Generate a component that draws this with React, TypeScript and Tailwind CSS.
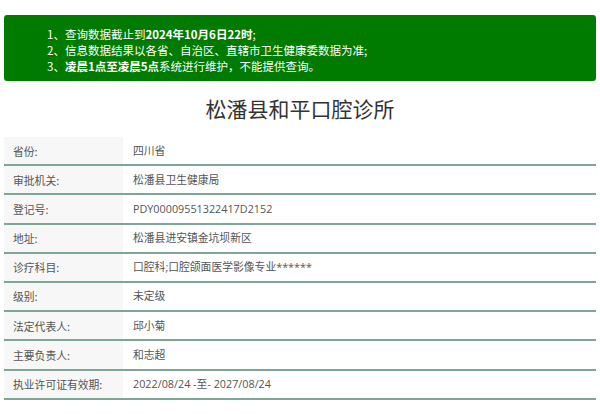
import React from "react";

const rows: [string, string][] = [
  ["省份:", "四川省"],
  ["审批机关:", "松潘县卫生健康局"],
  ["登记号:", "PDY00009551322417D2152"],
  ["地址:", "松潘县进安镇金坑坝新区"],
  ["诊疗科目:", "口腔科;口腔颌面医学影像专业******"],
  ["级别:", "未定级"],
  ["法定代表人:", "邱小菊"],
  ["主要负责人:", "和志超"],
  ["执业许可证有效期:", "2022/08/24 -至- 2027/08/24"],
];

export default function App() {
  return (
    <div
      className="w-[600px] h-[414px] bg-white overflow-hidden"
      style={{ fontFamily: '"Noto Sans CJK SC", "Noto Sans", sans-serif' }}
    >
      <div className="mx-[4px] mt-[15px] h-[66px] rounded-[3px] bg-[#007b00] pl-[43px] pt-[11px] text-[11.5px] leading-[16px] text-white">
        <div>
          1、查询数据截止到<b>2024年10月6日22时</b>;
        </div>
        <div>2、信息数据结果以各省、自治区、直辖市卫生健康委数据为准;</div>
        <div>
          3、<b>凌晨1点至凌晨5点</b>系统进行维护，不能提供查询。
        </div>
      </div>
      <div className="h-[56px] flex items-center justify-center text-[21px] text-[#333]">
        松潘县和平口腔诊所
      </div>
      <div className="mx-[4px] text-[10.8px] text-[#555]">
        {rows.map(([k, v]) => (
          <div key={k} className="flex h-[29.2px] border-b-2 border-[#7ea595]">
            <div className="w-[119px] bg-[#f7f7f7] pl-[9px] flex items-center">{k}</div>
            <div
              className="flex-1 pl-[10px] flex items-center"
              style={{ fontFamily: '"Open Sans", "Noto Sans CJK SC", sans-serif' }}
            >
              {v}
            </div>
          </div>
        ))}
      </div>
    </div>
  );
}
